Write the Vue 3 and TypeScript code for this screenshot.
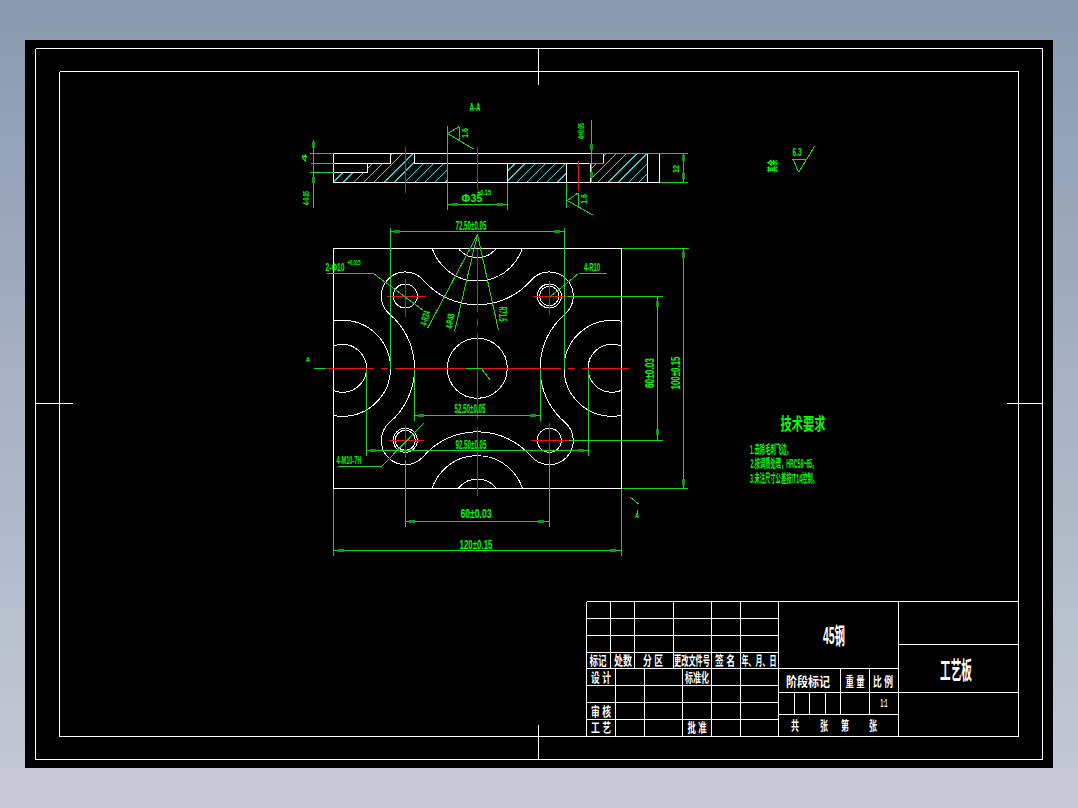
<script setup lang="ts">
type Seg = [number, number, number, number]

interface Label {
  t: string
  x: number
  y: number
  w: number
  fs: number
  rot?: number
}

const frame: Seg[] = [
  [35, 48, 1042, 48], [35, 759, 1042, 759], [35, 48, 35, 759], [1042, 48, 1042, 759],
  [59, 71, 1018, 71], [59, 736, 1018, 736], [59, 71, 59, 736], [1018, 71, 1018, 736],
  [538, 48, 538, 84], [538, 724, 538, 759], [35, 403, 72, 403], [1006, 403, 1042, 403],
]

const titleBlock: Seg[] = [
  // left table
  [586, 601, 1018, 601], [586, 618, 778, 618], [586, 635, 778, 635], [586, 652, 778, 652],
  [586, 668, 898, 668], [586, 685, 778, 685], [586, 702, 778, 702], [586, 719, 778, 719],
  [586, 601, 586, 736], [610, 601, 610, 668], [634, 601, 634, 668], [673, 601, 673, 668],
  [711, 601, 711, 736], [740, 601, 740, 736], [615, 668, 615, 736], [644, 668, 644, 736],
  [682, 668, 682, 736], [778, 601, 778, 736],
  // right table
  [898, 601, 898, 736], [898, 644, 1018, 644], [778, 692, 1018, 692], [778, 714, 898, 714],
  [840, 668, 840, 714], [869, 668, 869, 714], [794, 692, 794, 714], [809, 692, 809, 714], [825, 692, 825, 714],
]

const sectionWhite: Seg[] = [
  [333, 153, 590, 153], [333, 182, 659, 182], [333, 163, 390, 163], [414, 163, 590, 163], [333, 172, 367, 172],
  [333, 153, 333, 182], [390, 153, 390, 163], [414, 153, 414, 163], [367, 163, 367, 172], [447, 163, 447, 182],
  [507, 163, 507, 182], [566, 163, 566, 182], [590, 163, 590, 182], [603, 153, 603, 163], [647, 153, 647, 182],
  [659, 153, 659, 182],
]

const reds: Seg[] = [
  [405, 146, 405, 192], [477, 146, 477, 188], [578, 160, 578, 190],
  [386, 296, 425, 296], [405, 278, 405, 316], [532, 296, 567, 296], [549, 280, 549, 314],
  [388, 440, 423, 440], [405, 424, 405, 457], [530, 440, 568, 440], [549, 422, 549, 459],
  [477, 248, 477, 311], [477, 318, 477, 325], [477, 332, 477, 418], [477, 426, 477, 495],
  [326, 368, 373, 368], [380, 368, 387, 368], [394, 368, 560, 368], [567, 368, 574, 368], [581, 368, 628, 368],
]

const greens: Seg[] = [
  // section view
  [313, 139, 313, 207], [309, 153, 333, 153], [310, 163, 333, 163], [309, 172, 333, 172],
  [447, 125, 447, 209], [459, 126, 459, 140], [447, 133, 459, 126], [447, 133, 474, 149],
  [507, 182, 507, 209], [447, 204, 507, 204],
  [591, 119, 591, 182], [590, 153, 687, 153], [588, 163, 603, 163], [659, 182, 687, 182], [683, 153, 683, 182],
  [566, 182, 566, 207], [578, 192, 578, 207], [567, 200, 578, 192], [567, 200, 593, 215],
  // plan view, dimensions
  [390, 227, 390, 368], [564, 227, 564, 368], [390, 231, 564, 231],
  [621, 248, 688, 248], [621, 488, 687, 488], [683, 248, 683, 488],
  [567, 296, 662, 296], [568, 440, 662, 440], [657, 296, 657, 440],
  [366, 368, 366, 455], [588, 368, 588, 455], [366, 450, 588, 450],
  [414, 368, 414, 420], [540, 368, 540, 420], [414, 415, 540, 415],
  [405, 459, 405, 526], [549, 459, 549, 526], [405, 521, 549, 521],
  [333, 488, 333, 555], [621, 488, 621, 555], [333, 550, 621, 550],
  // leaders
  [326, 273, 373, 273], [373, 273, 423, 310],
  [606, 273, 578, 273], [578, 273, 550, 296],
  [337, 466, 381, 466], [381, 466, 423, 423],
  [477, 234, 427, 328], [477, 234, 454, 331], [477, 234, 498, 330],
  [465, 368, 481, 368], [481, 368, 490, 380],
  [313, 368, 325, 368], [630, 497, 639, 504], [637, 509, 637, 513],
  // roughness note
  [791, 159, 806, 159], [793, 159, 798, 172], [806, 159, 798, 172], [806, 159, 814, 146],
]

// small arrow marks on the dimension lines
const arrowsH: [number, number][] = [
  [397, 231], [557, 231], [421, 415], [533, 415], [373, 450], [581, 450],
  [412, 521], [541, 521], [341, 550], [613, 550], [455, 204], [500, 204],
]
const arrowsV: [number, number][] = [
  [683, 255], [683, 482], [657, 304], [657, 432], [313, 145], [313, 180],
  [683, 158], [683, 176], [591, 147], [591, 175],
]

const contour =
  'M423.5 280.3 A71.3 71.3 0 0 0 531.1 280.3 A24 24 0 1 1 565 314.1 A71.3 71.3 0 0 0 565 422.5 ' +
  'A24 24 0 1 1 531.1 456.3 A71.3 71.3 0 0 0 423.5 456.3 A24 24 0 1 1 389.6 422.5 ' +
  'A71.3 71.3 0 0 0 389.6 314.1 A24 24 0 1 1 423.5 280.3 Z'

const circles: [number, number, number][] = [
  [405.3, 296, 12], [549.3, 296, 12], [549.3, 296, 9.7], [405.3, 440.3, 12], [405.3, 440.3, 10], [549.3, 440.3, 12],
  [477.3, 368.3, 30],
]
// these run past the plate edge and get clipped by it
const clippedCircles: [number, number, number][] = [
  [477.3, 233.7, 24], [477.3, 233.7, 47.3], [477.3, 503, 24], [477.3, 503, 47.3],
  [342.5, 368.3, 24], [342.5, 368.3, 48], [612, 368.3, 24], [612, 368.3, 48],
]

const hatch = Array.from({ length: 33 }, (_, k) => 333.5 + 10.18 * k)

const greenLabels: Label[] = [
  { t: 'A-A', x: 475, y: 107, w: 11, fs: 10 },
  { t: '4', x: 304, y: 158, w: 8, fs: 8, rot: -90 },
  { t: '4-0.05', x: 306, y: 198, w: 14, fs: 9, rot: -90 },
  { t: '1.6', x: 465, y: 133, w: 10, fs: 9, rot: -90 },
  { t: '1.6', x: 584, y: 199, w: 10, fs: 9, rot: -90 },
  { t: '4+0.05', x: 581, y: 131, w: 16, fs: 9, rot: -90 },
  { t: 'Φ35', x: 472, y: 198, w: 21, fs: 11 },
  { t: '+0.15', x: 484, y: 192, w: 14, fs: 8 },
  { t: '12', x: 676, y: 169, w: 8, fs: 9, rot: -90 },
  { t: '72.50±0.05', x: 471, y: 225, w: 31, fs: 13 },
  { t: '52.50±0.05', x: 470, y: 408, w: 31, fs: 13 },
  { t: '92.50±0.05', x: 471, y: 444, w: 31, fs: 13 },
  { t: '60±0.03', x: 476, y: 514, w: 31, fs: 12 },
  { t: '120±0.15', x: 476, y: 544, w: 33, fs: 13 },
  { t: '60±0.03', x: 650, y: 373, w: 30, fs: 12, rot: -90 },
  { t: '100±0.15', x: 676, y: 373, w: 33, fs: 12, rot: -90 },
  { t: '2-Φ10', x: 335, y: 267, w: 19, fs: 11 },
  { t: '+0.015', x: 354, y: 262, w: 13, fs: 8 },
  { t: '4-R10', x: 592, y: 267, w: 16, fs: 11 },
  { t: '4-M10-7H', x: 349, y: 460, w: 25, fs: 11 },
  { t: '4-R24', x: 425, y: 318, w: 15, fs: 10, rot: -75 },
  { t: '4-R48', x: 450, y: 321, w: 15, fs: 10, rot: -80 },
  { t: 'R71.5', x: 502, y: 314, w: 15, fs: 10, rot: 90 },
  { t: 'A', x: 308, y: 359, w: 4, fs: 7 },
  { t: 'A', x: 637, y: 515, w: 4, fs: 7 },
  { t: '其余', x: 773, y: 166, w: 13, fs: 11, rot: -90 },
  { t: '6.3', x: 797, y: 152, w: 9, fs: 11 },
  { t: '技术要求', x: 803, y: 424, w: 45, fs: 17 },
  { t: '1.去除毛刺飞边。', x: 771, y: 450, w: 42, fs: 12 },
  { t: '2.按调质处理，HRC58~65。', x: 784, y: 464, w: 67, fs: 12 },
  { t: '3.未注尺寸公差按IT14控制。', x: 784, y: 479, w: 68, fs: 12 },
]

const whiteLabels: Label[] = [
  { t: '标记', x: 598, y: 660, w: 17, fs: 13 },
  { t: '处数', x: 623, y: 660, w: 18, fs: 13 },
  { t: '分 区', x: 653, y: 660, w: 20, fs: 13 },
  { t: '更改文件号', x: 692, y: 660, w: 36, fs: 13 },
  { t: '签 名', x: 725, y: 660, w: 20, fs: 13 },
  { t: '年、月、日', x: 759, y: 660, w: 35, fs: 13 },
  { t: '设 计', x: 601, y: 677, w: 20, fs: 13 },
  { t: '标准化', x: 697, y: 677, w: 24, fs: 13 },
  { t: '审 核', x: 601, y: 711, w: 20, fs: 13 },
  { t: '工 艺', x: 601, y: 727, w: 20, fs: 13 },
  { t: '批 准', x: 697, y: 727, w: 19, fs: 13 },
  { t: '阶段标记', x: 808, y: 681, w: 44, fs: 13 },
  { t: '重 量', x: 855, y: 681, w: 19, fs: 13 },
  { t: '比 例', x: 883, y: 681, w: 20, fs: 13 },
  { t: '1:1', x: 884, y: 703, w: 7, fs: 11 },
  { t: '共', x: 795, y: 725, w: 8, fs: 13 },
  { t: '张', x: 824, y: 725, w: 8, fs: 13 },
  { t: '第', x: 845, y: 725, w: 8, fs: 13 },
  { t: '张', x: 873, y: 725, w: 8, fs: 13 },
  { t: '45钢', x: 834, y: 636, w: 22, fs: 23 },
  { t: '工艺板', x: 956, y: 670, w: 32, fs: 24 },
]

function place(l: Label) {
  return `translate(${l.x} ${l.y}) rotate(${l.rot ?? 0})`
}
</script>

<template>
  <div class="page">
    <div class="sheet">
      <svg class="drawing" viewBox="25 40 1028 728" width="1028" height="728">
        <defs>
          <clipPath id="plate">
            <rect x="333" y="248" width="289" height="241" />
          </clipPath>
          <clipPath id="section">
            <path d="M333 172H367V163H390V153H414V163H447V182H333Z" />
            <path d="M507 163H566V182H507Z" />
            <path d="M590 163H603V153H647V182H590Z" />
          </clipPath>
        </defs>

        <!-- section A-A -->
        <g clip-path="url(#section)">
          <line v-for="x in hatch" :key="x" class="cyan" :x1="x" y1="182" :x2="x + 29" y2="153" />
        </g>

        <!-- plan view curves -->
        <path class="outline" :d="contour" />
        <circle v-for="(c, i) in circles" :key="'c' + i" class="outline" :cx="c[0]" :cy="c[1]" :r="c[2]" />
        <g clip-path="url(#plate)">
          <circle v-for="(c, i) in clippedCircles" :key="'k' + i" class="outline" :cx="c[0]" :cy="c[1]" :r="c[2]" />
        </g>

        <!-- straight lines sit on pixel centres -->
        <g transform="translate(0.5 0.5)">
          <line v-for="(s, i) in frame" :key="'f' + i" class="white" :x1="s[0]" :y1="s[1]" :x2="s[2]" :y2="s[3]" />
          <line v-for="(s, i) in titleBlock" :key="'t' + i" class="white" :x1="s[0]" :y1="s[1]" :x2="s[2]" :y2="s[3]" />
          <line v-for="(s, i) in sectionWhite" :key="'w' + i" class="white" :x1="s[0]" :y1="s[1]" :x2="s[2]" :y2="s[3]" />
          <rect class="outline" x="333" y="248" width="288" height="240" />
          <line v-for="(s, i) in reds" :key="'r' + i" class="red" :x1="s[0]" :y1="s[1]" :x2="s[2]" :y2="s[3]" />
          <line v-for="(s, i) in greens" :key="'g' + i" class="green" :x1="s[0]" :y1="s[1]" :x2="s[2]" :y2="s[3]" />
        </g>
        <rect v-for="(a, i) in arrowsH" :key="'h' + i" class="arrow" :x="a[0] - 3" :y="a[1] - 1" width="6" height="3" />
        <rect v-for="(a, i) in arrowsV" :key="'v' + i" class="arrow" :x="a[0] - 1" :y="a[1] - 3" width="3" height="6" />

        <text
          v-for="(l, i) in greenLabels"
          :key="'gl' + i"
          class="label label-green"
          :transform="place(l)"
          :font-size="l.fs"
          :textLength="l.w"
          lengthAdjust="spacingAndGlyphs"
        >{{ l.t }}</text>
        <text
          v-for="(l, i) in whiteLabels"
          :key="'wl' + i"
          class="label label-white"
          :transform="place(l)"
          :font-size="l.fs"
          :textLength="l.w"
          lengthAdjust="spacingAndGlyphs"
        >{{ l.t }}</text>
      </svg>
    </div>
  </div>
</template>

<style scoped>
.page {
  height: 808px;
  box-sizing: border-box;
  padding: 40px 25px;
  background: linear-gradient(#8a9aaf, #c6cad6);
}

.sheet {
  height: 728px;
  background: #000;
}

.drawing {
  display: block;
  shape-rendering: crispEdges;
}

.white,
.outline {
  stroke: #fff;
  stroke-width: 1;
  fill: none;
}

.cyan {
  stroke: #22d8d8;
  stroke-width: 1;
}

.red {
  stroke: #ee1111;
  stroke-width: 1;
}

.green {
  stroke: #14dc14;
  stroke-width: 1;
}

.arrow {
  fill: #0f9a0f;
}

.label {
  font-family: "Liberation Sans", "Noto Sans CJK SC", sans-serif;
  text-anchor: middle;
  dominant-baseline: central;
}

.label-green {
  fill: #00ff00;
  font-weight: 700;
}

.label-white {
  fill: #fff;
  font-weight: 700;
}
</style>
